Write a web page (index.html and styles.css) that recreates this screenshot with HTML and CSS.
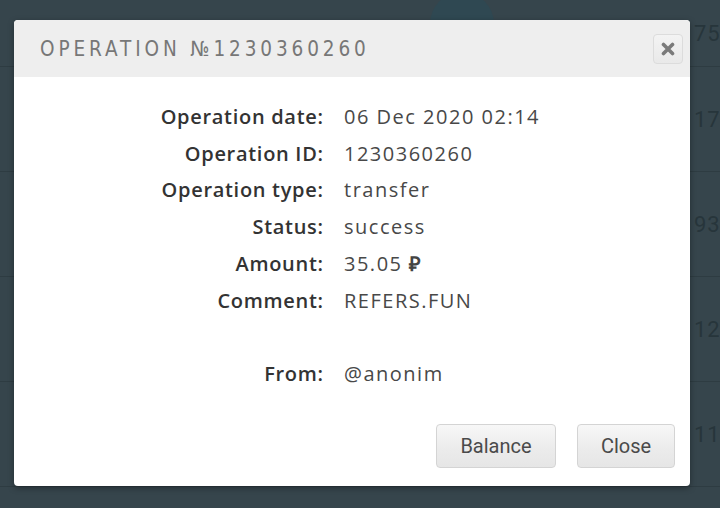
FILE: index.html
```html
<!DOCTYPE html>
<html>
<head>
<meta charset="utf-8">
<link rel="stylesheet" href="styles.css">
</head>
<body>
<div class="page">
  <div class="avatar"></div>
  <div class="bg-table">
    <div class="bg-row"><span>756</span></div>
    <div class="bg-row"><span>176</span></div>
    <div class="bg-row"><span>935</span></div>
    <div class="bg-row"><span>121</span></div>
    <div class="bg-row"><span>116</span></div>
  </div>
  <div class="modal">
    <div class="modal-header">
      <h2 class="modal-title">OPERATION №1230360260</h2>
      <button class="close-x" aria-label="close">
        <svg width="14" height="14" viewBox="0 0 14 14"><path d="M2.5 2.5 L11.5 11.5 M11.5 2.5 L2.5 11.5" stroke="#7a7a7a" stroke-width="3.6" stroke-linecap="round"/></svg>
      </button>
    </div>
    <div class="modal-body">
      <div class="info">
        <div class="lbl">Operation date:</div><div class="val">06 Dec 2020 02:14</div>
        <div class="lbl">Operation ID:</div><div class="val">1230360260</div>
        <div class="lbl">Operation type:</div><div class="val">transfer</div>
        <div class="lbl">Status:</div><div class="val">success</div>
        <div class="lbl">Amount:</div><div class="val">35.05 <b class="rub">₽</b></div>
        <div class="lbl">Comment:</div><div class="val">REFERS.FUN</div>
        <div class="lbl"></div><div class="val"></div>
        <div class="lbl">From:</div><div class="val">@anonim</div>
      </div>
      <div class="footer">
        <button class="btn btn-balance">Balance</button>
        <button class="btn btn-close">Close</button>
      </div>
    </div>
  </div>
</div>
</body>
</html>
```
FILE: styles.css
```css
html, body {
  margin: 0;
  padding: 0;
}
body {
  width: 720px;
  height: 508px;
  overflow: hidden;
  background: #36454c;
  font-family: "Open Sans", sans-serif;
}
.page {
  position: relative;
  width: 720px;
  height: 508px;
}
.avatar {
  position: absolute;
  left: 430px;
  top: -8px;
  width: 64px;
  height: 64px;
  border-radius: 50%;
  background: #2f4852;
}
.bg-table {
  display: flex;
  flex-direction: column;
}
.bg-row {
  height: 104px;
  display: flex;
  align-items: center;
  justify-content: flex-end;
  border-bottom: 1px solid #2e3c42;
  font-family: "Roboto", sans-serif;
  font-size: 22px;
  color: #27353b;
  letter-spacing: 1px;
}
.bg-row:first-child {
  height: 66px;
}
.bg-row span {
  margin-right: -14px;
}
.modal {
  position: absolute;
  left: 14px;
  top: 20px;
  width: 676px;
  height: 466px;
  background: #fff;
  border-radius: 4px;
  box-shadow: 0 2px 6px rgba(0,0,0,0.35);
  overflow: hidden;
  display: flex;
  flex-direction: column;
}
.modal-header {
  height: 57px;
  background: #eeeeee;
  display: flex;
  align-items: center;
  justify-content: space-between;
  padding: 0 7px 0 26px;
}
.modal-title {
  margin: 0;
  font-family: "DejaVu Sans", sans-serif;
  font-weight: normal;
  font-size: 21px;
  letter-spacing: 4.4px;
  color: #777;
  white-space: nowrap;
  transform: scaleX(0.88);
  transform-origin: left center;
}
.close-x {
  width: 30px;
  height: 30px;
  margin-top: 1px;
  border: 1px solid #dcdcdc;
  border-radius: 4px;
  background: linear-gradient(#f3f3f3, #e9e9e9);
  display: flex;
  align-items: center;
  justify-content: center;
  padding: 0;
}
.modal-body {
  flex: 1;
  display: flex;
  flex-direction: column;
  padding-top: 21px;
}
.info {
  display: grid;
  grid-template-columns: 309px 1fr;
  column-gap: 21px;
  grid-auto-rows: 36.8px;
  align-items: center;
  font-size: 20px;
}
.lbl {
  text-align: right;
  font-weight: 600;
  color: #333;
  letter-spacing: 0.7px;
  margin-right: -0.7px;
}
.val {
  color: #484848;
  letter-spacing: 1.5px;
}
.rub {
  font-weight: 700;
  color: #444;
}
.footer {
  margin-top: auto;
  display: flex;
  justify-content: flex-end;
  gap: 21px;
  padding: 0 15px 18px 0;
}
.btn {
  height: 44px;
  border: 1px solid #d4d4d4;
  border-radius: 4px;
  background: linear-gradient(#f7f7f7, #ebebeb 60%, #e6e6e6);
  font-family: "Roboto", sans-serif;
  font-size: 20px;
  color: #4a4a4a;
  padding: 0;
}
.btn-balance { width: 120px; }
.btn-close { width: 98px; }
```
